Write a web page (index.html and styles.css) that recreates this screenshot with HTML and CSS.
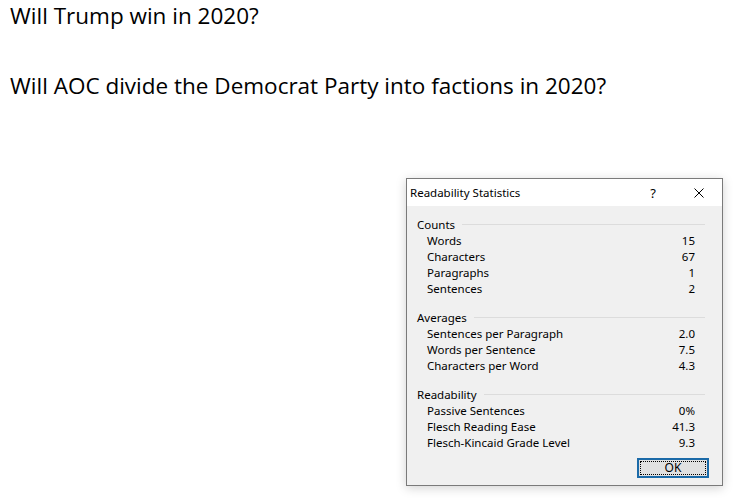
FILE: index.html
```html
<!DOCTYPE html>
<html>
<head>
<meta charset="utf-8">
<link rel="stylesheet" href="styles.css">
</head>
<body>
<div class="doc">
  <p class="q">Will Trump win in 2020?</p>
  <p class="q">Will AOC divide the Democrat Party into factions in 2020?</p>
</div>
<div class="dialog">
  <div class="titlebar">
    <span class="title">Readability Statistics</span>
    <span class="help">?</span>
    <span class="close"><svg width="10" height="10" viewBox="0 0 10 10"><path d="M0.5 0.5L9.5 9.5M9.5 0.5L0.5 9.5" stroke="#000" stroke-width="1" fill="none"/></svg></span>
  </div>
  <div class="body">
    <div class="group">
      <div class="ghead"><span>Counts</span><span class="rule"></span></div>
      <div class="row"><span>Words</span><span>15</span></div>
      <div class="row"><span>Characters</span><span>67</span></div>
      <div class="row"><span>Paragraphs</span><span>1</span></div>
      <div class="row"><span>Sentences</span><span>2</span></div>
    </div>
    <div class="group">
      <div class="ghead"><span>Averages</span><span class="rule"></span></div>
      <div class="row"><span>Sentences per Paragraph</span><span>2.0</span></div>
      <div class="row"><span>Words per Sentence</span><span>7.5</span></div>
      <div class="row"><span>Characters per Word</span><span>4.3</span></div>
    </div>
    <div class="group">
      <div class="ghead"><span>Readability</span><span class="rule"></span></div>
      <div class="row"><span>Passive Sentences</span><span>0%</span></div>
      <div class="row"><span>Flesch Reading Ease</span><span>41.3</span></div>
      <div class="row"><span>Flesch-Kincaid Grade Level</span><span>9.3</span></div>
    </div>
    <div class="buttons"><button class="ok"><span>OK</span></button></div>
  </div>
</div>
</body>
</html>
```
FILE: styles.css
```css
html, body { margin: 0; padding: 0; background: #fff; }
body { width: 735px; height: 504px; position: relative; overflow: hidden; }
.doc { padding: 0 0 0 10px; font-family: "Open Sans", sans-serif; font-size: 22.5px; color: #000; }
.q { margin: 0; height: 35px; line-height: 31px; }
.q + .q { margin-top: 35px; }
.dialog {
  position: absolute; left: 406px; top: 178px; width: 315px; height: 306px;
  border: 1px solid #7a7a7a; background: #f0f0f0;
  box-shadow: 0 2px 10px rgba(0,0,0,0.18);
  font-family: "Noto Sans", sans-serif; font-size: 11.5px; color: #000;
  display: flex; flex-direction: column;
}
.titlebar { height: 27px; background: #fff; display: flex; align-items: center; padding-left: 3px; }
.title { flex: 1; font-size: 11.5px; }
.help { width: 20px; text-align: center; font-size: 13px; margin-right: 31px; }
.close { width: 10px; margin-right: 18px; display: flex; }
.body { padding: 10px 17px 0 10px; display: flex; flex-direction: column; }
.group { margin-bottom: 12px; }
.ghead { display: flex; align-items: center; height: 17px; }
.ghead .rule { flex: 1; height: 0; border-top: 1px solid #dcdcdc; margin-left: 7px; }
.row { display: flex; justify-content: space-between; height: 16px; line-height: 16px; padding-left: 10px; padding-right: 10px; }
.buttons { display: flex; justify-content: flex-end; margin-top: -5px; }
.ok {
  width: 72px; height: 20px; margin-right: -4px; padding: 1px; border: 2px solid #1b6aa8; background: #e1e1e1;
  font-family: "Noto Sans", sans-serif; font-size: 12px; color: #000; display: flex;
}
.ok span { flex: 1; border: 1px dotted #000; line-height: 12px; }
```
